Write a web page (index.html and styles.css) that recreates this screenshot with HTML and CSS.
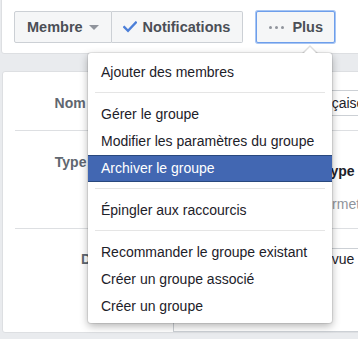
FILE: index.html
```html
<!DOCTYPE html>
<html lang="fr">

<head>
    <meta charset="UTF-8">
    <meta name="viewport" content="width=device-width, initial-scale=1.0">
    <title>Paramètres du groupe</title>

    <link rel="stylesheet" href="styles.css">
</head>

<body>

    <!-- Group action bar -->
    <div class="top-card">
        <div class="toolbar">
            <div class="btn-group">
                <button type="button" class="btn btn-member">Membre <span class="caret"></span></button>
                <button type="button" class="btn btn-notif">
                    <svg class="check" width="14" height="12" viewBox="0 0 14 12">
                        <path d="M1.3 6.2 L5 9.8 L12.8 1.6" fill="none" stroke="#4c7fd8" stroke-width="2.4" stroke-linecap="square" />
                    </svg>
                    Notifications
                </button>
            </div>
            <button type="button" class="btn btn-more">
                <span class="dots"><i></i><i></i><i></i></span>
                Plus
            </button>
        </div>
    </div>

    <!-- Settings form behind the menu -->
    <div class="settings-card">
        <div class="row">
            <div class="label">Nom du groupe</div>
            <div class="field">
                <div class="input">Amis de la Langue Française</div>
            </div>
        </div>
        <div class="row">
            <div class="label label-type">Type de groupe</div>
            <div class="field">
                <div class="type-options">
                    <div class="type-option">
                        <div class="type-title">Club</div>
                        <div class="type-desc">Pour les passionnés</div>
                    </div>
                    <div class="type-option">
                        <div class="type-title type-title-shift">Type</div>
                        <div class="type-desc">Permet de choisir</div>
                    </div>
                </div>
            </div>
        </div>
        <div class="row row-last">
            <div class="label label-desc">Description</div>
            <div class="field field-desc">
                <div class="textarea">Partager nos points de vue</div>
            </div>
        </div>
    </div>

    <!-- "Plus" dropdown menu -->
    <ul class="menu">
        <li class="menu-item">Ajouter des membres</li>
        <li class="menu-sep"></li>
        <li class="menu-item">Gérer le groupe</li>
        <li class="menu-item">Modifier les paramètres du groupe</li>
        <li class="menu-item active">Archiver le groupe</li>
        <li class="menu-sep"></li>
        <li class="menu-item">Épingler aux raccourcis</li>
        <li class="menu-sep"></li>
        <li class="menu-item">Recommander le groupe existant</li>
        <li class="menu-item">Créer un groupe associé</li>
        <li class="menu-item">Créer un groupe</li>
    </ul>

</body>

</html>
```

FILE: styles.css
```css
/* General Styles */
body {
    font-family: 'Liberation Sans', Arial, sans-serif;
    font-size: 14px;
    background: #e9ebee;
    margin: 0;
    overflow: hidden;
    position: relative;
    height: 339px;
}

/* Top bar card */
.top-card {
    width: 440px;
    margin: -4px 0 0 1px;
    padding: 14px 12px 10px;
    background: #fff;
    border: 1px solid #dddfe2;
    border-radius: 3px;
}

.toolbar {
    display: flex;
    gap: 13px;
}

.btn-group {
    display: flex;
}

/* Buttons */
.btn {
    display: inline-flex;
    align-items: center;
    box-sizing: border-box;
    height: 32px;
    padding: 0 12px;
    font-family: inherit;
    font-size: 14.5px;
    font-weight: bold;
    color: #4b4f56;
    background: #f5f6f7;
    border: 1px solid #ccd0d5;
    border-radius: 2px;
    cursor: pointer;
}

.btn-member {
    border-radius: 2px 0 0 2px;
}

.btn-notif {
    border-left: none;
    border-radius: 0 2px 2px 0;
    padding: 0 12px 0 11px;
}

.caret {
    display: inline-block;
    margin-left: 6px;
    border-left: 5px solid transparent;
    border-right: 5px solid transparent;
    border-top: 5px solid #90949c;
}

.check {
    margin-right: 6px;
}

/* Plus button with focus ring */
.btn-more {
    padding: 0 11px 0 12px;
    border-color: #6d9eeb;
    box-shadow: 0 0 0 1px rgba(109, 158, 235, 0.6);
}

.dots {
    display: inline-flex;
    gap: 3px;
    margin-right: 8px;
}

.dots i {
    width: 3px;
    height: 3px;
    border-radius: 50%;
    background: #90949c;
}

/* Settings card */
.settings-card {
    width: 440px;
    margin: 17px 0 0 2px;
    background: #fff;
    border: 1px solid #dddfe2;
    border-radius: 3px;
}

.row {
    display: grid;
    grid-template-columns: 158px 1fr;
    margin-left: 12px;
    border-bottom: 1px solid #dddfe2;
}

.row-last {
    border-bottom: none;
}

.label {
    text-align: right;
    padding: 18px 15px 0 0;
    line-height: 26px;
    font-weight: bold;
    color: #606770;
}

.label-type {
    padding-top: 22px;
    line-height: 18px;
}

.label-desc {
    padding-top: 21px;
    line-height: 18px;
}

.field {
    padding: 18px 0 14px;
}

.input {
    height: 26px;
    box-sizing: border-box;
    padding: 0 9px;
    line-height: 24px;
    border: 1px solid #ccd0d5;
    color: #1d2129;
}

/* Group type choices */
.type-options {
    display: flex;
    padding: 13px 0 1px 12px;
}

.type-option {
    width: 130px;
}

.type-title {
    line-height: 18px;
    font-weight: bold;
    color: #1d2129;
}

.type-title-shift {
    padding-left: 8px;
}

.type-desc {
    margin-top: 15px;
    line-height: 18px;
    color: #90949c;
}

.field-desc {
    padding: 19px 0 0;
}

.textarea {
    height: 84px;
    box-sizing: border-box;
    padding: 1px 13px;
    line-height: 18px;
    border: 1px solid #ccd0d5;
    color: #1d2129;
}

/* Dropdown menu */
.menu {
    position: absolute;
    left: 88px;
    top: 53px;
    width: 244px;
    margin: 0;
    padding: 6px 0 3px;
    list-style: none;
    background: #fff;
    border-radius: 3px;
    box-shadow: 0 0 0 1px rgba(0, 0, 0, 0.08), 0 3px 9px rgba(0, 0, 0, 0.3);
}

/* Caret pointing at the Plus button */
.menu::before,
.menu::after {
    content: "";
    position: absolute;
    border-style: solid;
    border-color: transparent;
}

.menu::before {
    left: 214px;
    top: -8px;
    border-width: 0 8px 8px;
    border-bottom-color: rgba(0, 0, 0, 0.12);
}

.menu::after {
    left: 215px;
    top: -6px;
    border-width: 0 7px 7px;
    border-bottom-color: #fff;
}

.menu-item {
    height: 27px;
    box-sizing: border-box;
    padding: 0 13px;
    line-height: 25px;
    color: #1d2129;
    border-top: 1px solid transparent;
    border-bottom: 1px solid transparent;
    white-space: nowrap;
}

.menu-item.active {
    background: #4267b2;
    border-color: #29487d;
    color: #fff;
}

.menu-sep {
    height: 1px;
    margin: 6px 7px 8px;
    background: #e5e5e5;
}
```
